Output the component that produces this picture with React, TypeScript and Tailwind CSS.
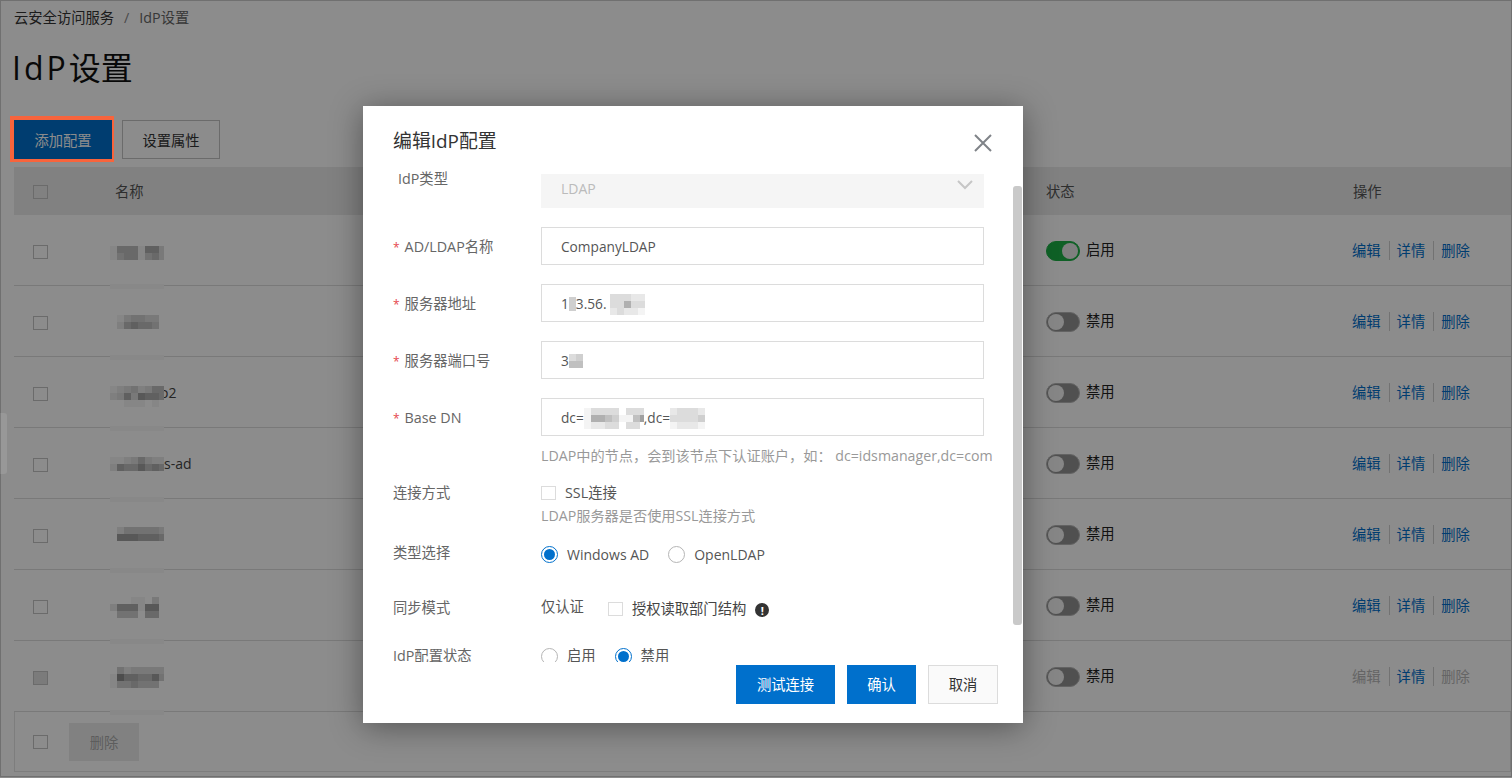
import React from 'react';

const sans = { fontFamily: '"Open Sans", "Noto Sans CJK SC", sans-serif' };

const shades: Record<string, string> = {
  '0': '#ffffff', '1': '#f4f4f4', '2': '#e8e8e8', '3': '#dcdcdc', '4': '#cfcfcf',
  '5': '#c0c0c0', '6': '#b0b0b0', '7': '#a0a0a0', '8': '#8c8c8c', '9': '#787878',
};

// Blurred-out text in the screenshot: rows of grey cells
const Mosaic = ({ rows, cell = 7, className = '' }: { rows: string[]; cell?: number; className?: string }) => (
  <svg width={rows[0].length * cell} height={rows.length * cell} className={className} shapeRendering="crispEdges">
    {rows.map((row, y) =>
      row.split('').map((c, x) => (
        <rect key={`${x}-${y}`} x={x * cell} y={y * cell} width={cell} height={cell} fill={shades[c]} />
      ))
    )}
  </svg>
);

const Toggle = ({ on }: { on: boolean }) => (
  <span
    className={`flex h-[20px] w-[34px] translate-y-[1px] rounded-full border p-[1px] ${on ? 'justify-end border-[#1cb045] bg-[#1cb045]' : 'justify-start border-[#b5b5b5] bg-[#939393]'}`}
  >
    <span className={`h-[16px] w-[16px] rounded-full ${on ? 'bg-[#e8e8e8]' : 'bg-[#f4f4f4]'}`} />
  </span>
);

const Check = ({ filled = false, dark = false }: { filled?: boolean; dark?: boolean }) => (
  <span
    className={`block h-[14px] w-[15px] border ${dark ? 'border-[#c4c4c4]' : 'border-[#dcdcdc]'} ${filled ? 'bg-[#e0e0e0]' : 'bg-transparent'}`}
  />
);

const tableRows = [
  { blob: ['15551663', '14551453'], on: true, extra: '', y: 'translate-y-[3px]', filled: false, off: false },
  { blob: ['01344330', '02565540'], on: false, extra: '', y: 'translate-y-[1px]', filled: false, off: false },
  { blob: ['12342355', '23637665', '00111010'], on: false, extra: 'o2', y: 'translate-y-[4px]', filled: false, off: false },
  { blob: ['11235322', '26557565'], on: false, extra: 's-ad', y: 'translate-y-[1px]', filled: false, off: false },
  { blob: ['02444443', '07776665'], on: false, extra: '', y: '', filled: false, off: false },
  { blob: ['00011030', '26661770', '04440550'], on: false, extra: '', y: 'translate-y-[2px]', filled: false, off: false },
  { blob: ['04233333', '18665574', '14454440'], on: false, extra: '', y: 'translate-y-[1px]', filled: true, off: true },
];

const FormLabel = ({ text, required = false, className = '' }: { text: string; required?: boolean; className?: string }) => (
  <div className={`w-[148px] shrink-0 text-[#666666] ${className}`}>
    {required ? <span className="mr-[5px] text-[12px] text-[#e5484d]">*</span> : null}
    {text}
  </div>
);

const inputBox = 'flex h-[38px] w-[443px] items-center border border-[#dcdcdc] pl-[19px] pt-[2px] text-[13.7px] text-[#555555]';

const InputRow = ({ label, children }: { label: string; children: React.ReactNode }) => (
  <div className="mt-[19px] flex items-center">
    <FormLabel text={label} required className="translate-y-[1px]" />
    <div className={inputBox}>{children}</div>
  </div>
);

const Radio = ({ checked = false }: { checked?: boolean }) => (
  <span
    className={`flex h-[17px] w-[17px] shrink-0 items-center justify-center rounded-full border ${checked ? 'border-[#0070cc]' : 'border-[#b5b5b5]'}`}
  >
    {checked ? <span className="h-[11px] w-[11px] rounded-full bg-[#0070cc]" /> : null}
  </span>
);

export default function App() {
  return (
    <div className="relative h-[778px] w-full overflow-hidden bg-white text-[14.3px] text-[#333333]" style={sans}>
      {/* page behind the dialog */}
      <div className="h-[777px] border border-[#cccccc] pl-[13px]">
        <div className="mt-[7px] flex h-[20px] items-center leading-[20px]">
          <span className="text-[#333333]">云安全访问服务</span>
          <span className="mx-[10px] text-[#888888]">/</span>
          <span className="text-[#666666]">IdP设置</span>
        </div>
        <h1 className="ml-[-2px] mt-[16px] h-[48px] text-[32px] leading-[48px] text-[#111111]">
          <span className="tracking-[3px]">IdP</span>设置
        </h1>
        <div className="mt-[28px] flex gap-[10px]">
          <button className="h-[39px] w-[98px] bg-[#0070cc] pt-[2px] text-white">添加配置</button>
          <button className="h-[39px] w-[98px] border border-[#c4c4c4] pt-[2px] text-[#333333]">设置属性</button>
        </div>

        <div className="mt-[8px] grid h-[48px] grid-cols-[101px_931px_307px_1fr] items-center bg-[#ebecec] pt-[2px] text-[#555555]">
          <span className="pl-[19px]"><Check dark /></span>
          <span>名称</span>
          <span>状态</span>
          <span>操作</span>
        </div>

        {tableRows.map((row, i) => (
          <div
            key={i}
            className="relative grid h-[71px] grid-cols-[101px_931px_307px_1fr] items-center border-b border-[#dcdcdc]"
          >
            <span className="translate-y-[2px] pl-[19px]"><Check filled={row.filled} dark /></span>
            <span className="flex items-center">
              <Mosaic rows={row.blob} className={`relative ml-[-5px] w-[54px] ${row.y}`} />
              {row.extra === 'o2' ? <span className="ml-[-4px] text-[14px] text-[#444444]">{row.extra}</span> : null}
              {row.extra === 's-ad' ? <span className="text-[14px] text-[#444444]">{row.extra}</span> : null}
            </span>
            <span className="flex items-center gap-[6px]">
              <Toggle on={row.on} />
              <span className="text-[#222222]">{row.on ? '启用' : '禁用'}</span>
            </span>
            <span className="ml-[-1px] flex items-center">
              <a className={`translate-y-[1px] ${row.off ? 'text-[#b8b8b8]' : 'text-[#0070cc]'}`}>编辑</a>
              <span className="ml-[8px] mr-[7px] h-[19px] w-px bg-[#cfcfcf]" />
              <a className="translate-y-[1px] text-[#0070cc]">详情</a>
              <span className="ml-[8px] mr-[7px] h-[19px] w-px bg-[#cfcfcf]" />
              <a className={`translate-y-[1px] ${row.off ? 'text-[#b8b8b8]' : 'text-[#0070cc]'}`}>删除</a>
            </span>
            <span className="absolute bottom-[-4px] left-[96px] h-[5px] w-[54px] bg-[#f7f7f7]" />
          </div>
        ))}

        <div className="mt-[-1px] flex h-[61px] items-center border border-[#e3e3e3] pl-[18px]">
          <Check dark />
          <button className="ml-[21px] h-[38px] w-[70px] bg-[#ececec] pt-[2px] text-[#aaaaaa]">删除</button>
        </div>
      </div>

      {/* mask */}
      <div className="absolute inset-0 bg-black/45" />
      <div className="absolute left-0 top-[413px] h-[61px] w-[7px] rounded-r-[3px] bg-white/10" />
      <div className="absolute left-[10px] top-[116px] h-[46px] w-[104px] border-b-[3px] border-l-[4px] border-r-[2px] border-t-[4px] border-[#f8643c]" />

      {/* dialog */}
      <div className="absolute left-[363px] top-[106px] h-[617px] w-[660px] bg-white shadow-[0_4px_30px_rgba(0,0,0,0.4)]">
        <div className="flex h-[62px] items-start justify-between pl-[30px] pr-[31px] pt-[21px]">
          <h2 className="text-[18.9px] leading-[28px] text-[#333333]">编辑IdP配置</h2>
          <svg width="18" height="18" viewBox="0 0 18 18" className="mt-[7px]" fill="none" stroke="#7f8388" strokeWidth="2">
            <path d="M1 1 17 17M17 1 1 17" />
          </svg>
        </div>

        <div className="relative h-[494px] overflow-hidden pl-[30px]">
          <div className="flex">
            <div className="mt-[1px] w-[148px] shrink-0 pl-[5px] leading-[20px] text-[#666666]">IdP类型</div>
            <div className="mt-[6px] flex h-[34px] w-[443px] items-center justify-between bg-[#f5f5f5] pb-[6px] pl-[20px] pr-[11px] text-[14px] text-[#bbbbbb]">
              <span>LDAP</span>
              <svg width="16" height="10" viewBox="0 0 16 10" className="mt-[-6px]" fill="none" stroke="#c6c6c6" strokeWidth="2">
                <path d="M1 1 8 8 15 1" />
              </svg>
            </div>
          </div>

          <InputRow label="AD/LDAP名称">CompanyLDAP</InputRow>
          <InputRow label="服务器地址">
            1<Mosaic rows={['4', '4']} />3.56.<Mosaic rows={['33322', '33633', '23221']} className="ml-[3px]" />
          </InputRow>
          <InputRow label="服务器端口号">
            3<Mosaic rows={['34', '55']} />
          </InputRow>
          <InputRow label="Base DN">
            dc=<Mosaic rows={['133330333', '166541157', '122330330']} className="w-[60px]" />,dc=<Mosaic rows={['23332', '33334', '12221']} />
          </InputRow>

          <div className="ml-[148px] mt-[10px] text-[14.2px] leading-[20px] text-[#999999]">LDAP中的节点，会到该节点下认证账户，如： dc=idsmanager,dc=com</div>

          <div className="mt-[17px] flex">
            <FormLabel text="连接方式" className="translate-y-[-1px]" />
            <div>
              <div className="flex h-[20px] items-center gap-[9px] text-[#555555]">
                <Check />
                <span>SSL连接</span>
              </div>
              <div className="mt-[3px] text-[14.2px] leading-[20px] text-[#999999]">LDAP服务器是否使用SSL连接方式</div>
            </div>
          </div>

          <div className="mt-[18px] flex h-[20px] items-center">
            <FormLabel text="类型选择" className="translate-y-[-1px]" />
            <Radio checked />
            <span className="ml-[9px] text-[14px] text-[#555555]">Windows AD</span>
            <span className="ml-[19px]"><Radio /></span>
            <span className="ml-[9px] text-[14px] text-[#555555]">OpenLDAP</span>
          </div>

          <div className="mt-[35px] flex h-[20px] items-center">
            <FormLabel text="同步模式" className="translate-y-[-1px]" />
            <span className="translate-y-[-2px] text-[#555555]">仅认证</span>
            <span className="ml-[24px]"><Check /></span>
            <span className="ml-[9px] text-[#444444]">授权读取部门结构</span>
            <span className="ml-[9px] flex h-[14px] w-[14px] translate-y-[1px] items-center justify-center rounded-full bg-[#333333] text-[11px] font-bold leading-none text-white">!</span>
          </div>

          <div className="mt-[27px] flex h-[20px] items-center">
            <FormLabel text="IdP配置状态" />
            <Radio />
            <span className="ml-[9px] text-[#555555]">启用</span>
            <span className="ml-[19px]"><Radio checked /></span>
            <span className="ml-[9px] text-[#555555]">禁用</span>
          </div>

          <div className="absolute left-[650px] top-[18px] h-[439px] w-[9px] rounded-[3px] bg-[#c9c9c9]" />
        </div>

        <div className="flex justify-end gap-[12px] pr-[25px] pt-[3px]">
          <button className="h-[39px] w-[99px] bg-[#0070cc] text-white">测试连接</button>
          <button className="h-[39px] w-[69px] bg-[#0070cc] text-white">确认</button>
          <button className="h-[39px] w-[70px] border border-[#dcdcdc] bg-[#fafafa] text-[#333333]">取消</button>
        </div>
      </div>
    </div>
  );
}
